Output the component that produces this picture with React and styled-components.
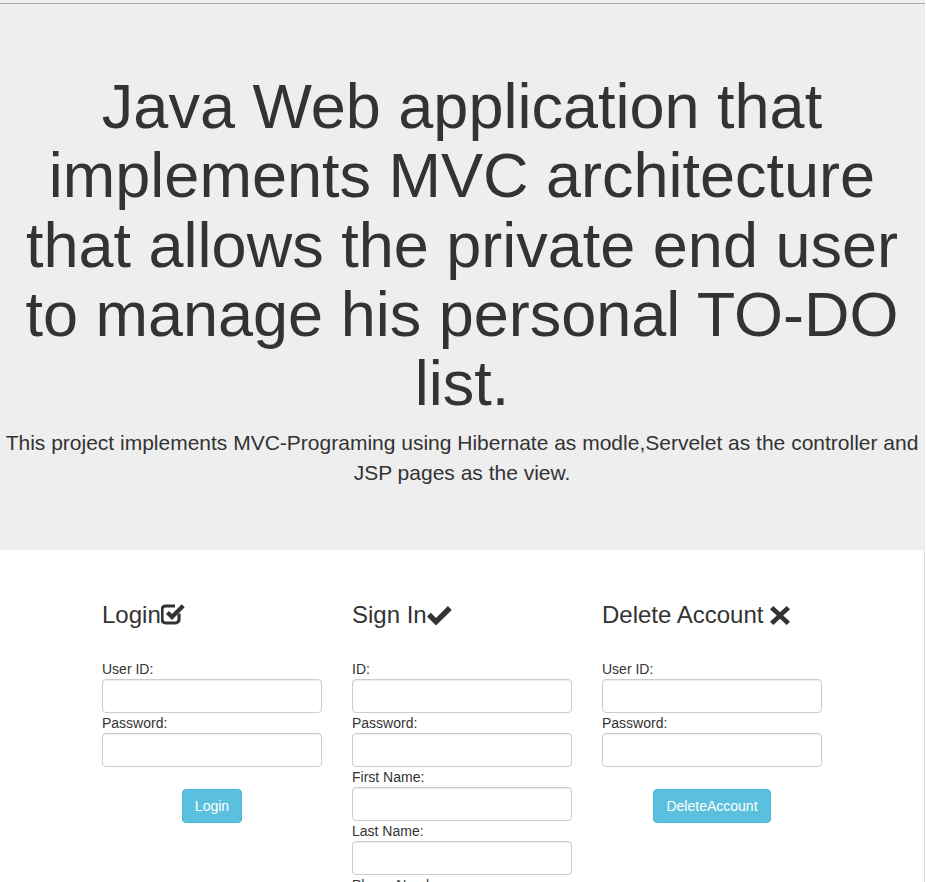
import React from "react";
import styled, {createGlobalStyle} from "styled-components";

const colors = {
    text: "#333",
    jumbo: "#eee",
    border: "#ccc",
    info: "#5bc0de",
    infoBorder: "#46b8da",
}

const GlobalStyle = createGlobalStyle`
  html, body {
    margin: 0;
    padding: 0;
    background: #fff;
  }
  body {
    font-family: "Liberation Sans", Arial, Helvetica, sans-serif;
    font-size: 14px;
    line-height: 1.42857;
    color: ${colors.text};
  }
  * {
    box-sizing: border-box;
  }
`

const Page = styled.div`
  width: 925px;
`

const TopBar = styled.div`
  height: 4px;
  background: #f0f0f0;
  border-bottom: 1px solid #a9a9a9;
`

const Jumbotron = styled.div`
  background: ${colors.jumbo};
  padding: 48px 1px 48px 0;
  text-align: center;
`

const Title = styled.h1`
  font-size: 63px;
  font-weight: 500;
  line-height: 1.1;
  margin: 20px 0 10px;
`

const Lead = styled.p`
  font-size: 21px;
  line-height: 1.4;
  margin: 0 0 15px;
`

const Main = styled.div`
  border-right: 1px solid #dcdcdc;
  height: 340px;
`

const Container = styled.div`
  width: 750px;
  margin: 0 auto;
  padding-top: 32px;
  display: flex;
`

const Col = styled.div`
  width: 250px;
  padding: 0 15px;
`

const H3 = styled.h3`
  font-size: 24px;
  font-weight: 500;
  line-height: 1.1;
  margin: 20px 0 30px;
  white-space: nowrap;

  & svg {
    vertical-align: -2px;
  }
`

const Label = styled.label`
  display: block;
  line-height: 20px;
  font-size: 14px;
  margin: 0;
`

const Input = styled.input`
  display: block;
  width: 100%;
  height: 34px;
  margin: 0;
  padding: 6px 12px;
  border: 1px solid ${colors.border};
  border-radius: 4px;
  box-shadow: inset 0 1px 1px rgba(0, 0, 0, .075);
  font-family: inherit;
  font-size: 14px;
  background: #fff;
`

const ButtonRow = styled.div`
  display: flex;
  justify-content: center;
  margin-top: 22px;
`

const Button = styled.button`
  height: 34px;
  padding: 6px 12px;
  font-family: inherit;
  font-size: 14px;
  line-height: 20px;
  color: #fff;
  background: ${colors.info};
  border: 1px solid ${colors.infoBorder};
  border-radius: 4px;
`

const CheckSquare = () => (
    <svg width="24" height="23" viewBox="0 0 24 23">
        <path d="M18 11.5v6a3.5 3.5 0 0 1-3.5 3.5h-10A3.5 3.5 0 0 1 1 17.5v-10A3.5 3.5 0 0 1 4.5 4h9.5"
              fill="none" stroke={colors.text} strokeWidth="3.2"/>
        <path d="M6.5 10.5l4.5 4.5 11.2-11.2" fill="none" stroke={colors.text} strokeWidth="4.2"/>
    </svg>
)

const Check = () => (
    <svg width="25" height="19" viewBox="0 0 25 19">
        <path d="M0 10.5L3.8 6.7 9 11.9 20.9 0 24.8 3.9 9 19.5Z" fill={colors.text}/>
    </svg>
)

const Cross = () => (
    <svg width="20" height="19" viewBox="0 0 20 19">
        <path d="M3.3 0L10 6.3 16.7 0 20 3.2 13.3 9.5 20 15.8 16.7 19 10 12.7 3.3 19 0 15.8 6.7 9.5 0 3.2Z"
              fill={colors.text}/>
    </svg>
)

const Field = ({label, type}) => (
    <>
        <Label>{label}</Label>
        <Input type={type || "text"}/>
    </>
)

export default function App() {
    return (
        <Page>
            <GlobalStyle/>
            <TopBar/>
            <Jumbotron>
                <Title>
                    Java Web application that implements MVC architecture that allows the private end user to
                    manage his personal TO-DO list.
                </Title>
                <Lead>
                    This project implements MVC-Programing using Hibernate as modle,Servelet as the controller and
                    JSP pages as the view.
                </Lead>
            </Jumbotron>
            <Main>
                <Container>
                    <Col>
                        <H3>Login<CheckSquare/></H3>
                        <Field label="User ID:"/>
                        <Field label="Password:" type="password"/>
                        <ButtonRow><Button>Login</Button></ButtonRow>
                    </Col>
                    <Col>
                        <H3>Sign In<Check/></H3>
                        <Field label="ID:"/>
                        <Field label="Password:" type="password"/>
                        <Field label="First Name:"/>
                        <Field label="Last Name:"/>
                        <Field label="Phone Number:"/>
                        <ButtonRow><Button>SignIn</Button></ButtonRow>
                    </Col>
                    <Col>
                        <H3>Delete Account <Cross/></H3>
                        <Field label="User ID:"/>
                        <Field label="Password:" type="password"/>
                        <ButtonRow><Button>DeleteAccount</Button></ButtonRow>
                    </Col>
                </Container>
            </Main>
        </Page>
    )
}
